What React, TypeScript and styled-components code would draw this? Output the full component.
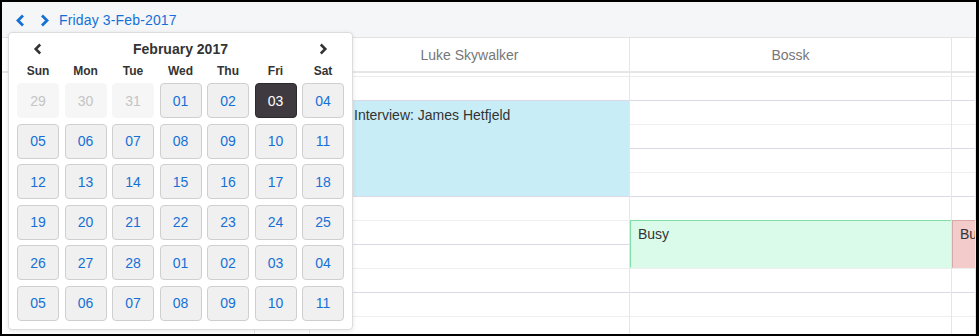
import styled, { createGlobalStyle } from "styled-components";

type CalEvent = {
  title: string;
  top: number;
  height: number;
  left?: number;
  kind: "interview" | "busy" | "blocked";
};

type Resource = {
  key: string;
  title: string;
  width?: number;
  plain?: boolean;
  events: CalEvent[];
};

const RESOURCES: Resource[] = [
  { key: "label", title: "", width: 253, plain: true, events: [] },
  { key: "time", title: "", width: 55, events: [] },
  {
    key: "luke",
    title: "Luke Skywalker",
    width: 320,
    events: [
      { title: "Interview: James Hetfjeld", top: 24, height: 95, left: 36, kind: "interview" },
    ],
  },
  {
    key: "bossk",
    title: "Bossk",
    width: 322,
    events: [{ title: "Busy", top: 143, height: 48, kind: "busy" }],
  },
  {
    key: "next",
    title: "",
    events: [{ title: "Busy", top: 143, height: 48, kind: "blocked" }],
  },
];

const WEEK_DAYS = ["Sun", "Mon", "Tue", "Wed", "Thu", "Fri", "Sat"];

type DayCell = { label: string; muted?: boolean; selected?: boolean };

const buildDays = (): DayCell[] => {
  const days: DayCell[] = [
    { label: "29", muted: true },
    { label: "30", muted: true },
    { label: "31", muted: true },
  ];
  for (let d = 1; d <= 28; d++) {
    days.push({ label: String(d).padStart(2, "0"), selected: d === 3 });
  }
  for (let d = 1; d <= 11; d++) {
    days.push({ label: String(d).padStart(2, "0") });
  }
  return days;
};

const SLOT_COUNT = 11;

const Chevron = ({ dir, size = 13 }: { dir: "left" | "right"; size?: number }) => (
  <svg width={Math.round(size * 0.77)} height={size} viewBox="0 0 10 13">
    <polyline
      points={dir === "left" ? "8,1.5 3,6.5 8,11.5" : "2,1.5 7,6.5 2,11.5"}
      fill="none"
      stroke="currentColor"
      strokeWidth="2.8"
      strokeLinecap="butt"
      strokeLinejoin="miter"
    />
  </svg>
);

export default function App() {
  const days = buildDays();
  return (
    <>
      <GlobalStyle />
      <Frame>
        <Toolbar>
          <NavButton>
            <Chevron dir="left" />
          </NavButton>
          <NavButton>
            <Chevron dir="right" />
          </NavButton>
          <DateLabel>Friday 3-Feb-2017</DateLabel>
        </Toolbar>

        <Scheduler>
          {RESOURCES.map((res) => (
            <Column key={res.key} $width={res.width}>
              <ColumnHeader>{res.title}</ColumnHeader>
              <AllDayStrip $plain={res.plain} />
              <SlotBody>
                {!res.plain &&
                  Array.from({ length: SLOT_COUNT }).map((_, i) => (
                    <Slot key={i} $hour={i % 2 === 0} />
                  ))}
                {res.events.map((ev, i) => (
                  <EventBox
                    key={i}
                    $kind={ev.kind}
                    style={{ top: ev.top, height: ev.height, left: ev.left ?? 0 }}
                  >
                    {ev.title}
                  </EventBox>
                ))}
              </SlotBody>
            </Column>
          ))}
        </Scheduler>

        <Picker>
          <PickerHead>
            <PickerNav>
              <Chevron dir="left" size={12} />
            </PickerNav>
            <MonthTitle>February 2017</MonthTitle>
            <PickerNav>
              <Chevron dir="right" size={12} />
            </PickerNav>
          </PickerHead>
          <WeekRow>
            {WEEK_DAYS.map((d) => (
              <WeekDay key={d}>{d}</WeekDay>
            ))}
          </WeekRow>
          <DayGrid>
            {days.map((d, i) => (
              <DayButton key={i} $muted={d.muted} $selected={d.selected}>
                {d.label}
              </DayButton>
            ))}
          </DayGrid>
        </Picker>
      </Frame>
    </>
  );
}

const GlobalStyle = createGlobalStyle`
  body {
    margin: 0;
    background: #fff;
    font-family: "Liberation Sans", Arial, Helvetica, sans-serif;
  }
  * { box-sizing: border-box; }
`;

const Frame = styled.div`
  position: relative;
  width: 979px;
  height: 336px;
  border: 2px solid #000;
  border-right-width: 3px;
  background: #fff;
  overflow: hidden;
  display: flex;
  flex-direction: column;
`;

const Toolbar = styled.div`
  height: 36px;
  flex: none;
  display: flex;
  align-items: center;
  padding: 1px 0 0 13px;
  background: #f5f6f8;
  border-bottom: 1px solid #e2e2e4;
  color: #1570d6;
`;

const NavButton = styled.span`
  display: flex;
  align-items: center;
  width: 10px;
  margin-right: 15px;
  color: #1570d6;
  &:nth-child(2) {
    margin-right: 9px;
  }
`;

const DateLabel = styled.span`
  font-size: 14px;
  letter-spacing: 0.15px;
  color: #1570d6;
`;

const Scheduler = styled.div`
  flex: 1;
  display: flex;
  min-height: 0;
`;

const Column = styled.div<{ $width?: number }>`
  display: flex;
  flex-direction: column;
  flex: ${({ $width }) => ($width ? `0 0 ${$width}px` : "1 1 auto")};
  border-right: 1px solid #e6e6e6;
  min-width: 0;
`;

const ColumnHeader = styled.div`
  height: 35px;
  flex: none;
  display: flex;
  align-items: center;
  justify-content: center;
  font-size: 14px;
  color: #777;
  border-bottom: 2px solid #e6e6e6;
`;

const AllDayStrip = styled.div<{ $plain?: boolean }>`
  height: 4px;
  flex: none;
  border-bottom: 1px solid ${({ $plain }) => ($plain ? "transparent" : "#ececec")};
`;

const SlotBody = styled.div`
  position: relative;
  flex: 1;
  overflow: hidden;
`;

const Slot = styled.div<{ $hour: boolean }>`
  height: 24px;
  border-bottom: 1px solid ${({ $hour }) => ($hour ? "#dcd9e6" : "#efefef")};
`;

const EVENT_COLORS = {
  interview: { bg: "#c9edf7", border: "#c9edf7" },
  busy: { bg: "#dbfbea", border: "#82dca8" },
  blocked: { bg: "#f3cbcb", border: "#d6a8a8" },
};

const EventBox = styled.div<{ $kind: CalEvent["kind"] }>`
  position: absolute;
  right: 0;
  padding: 5px 7px;
  font-size: 14px;
  color: #333;
  white-space: nowrap;
  overflow: hidden;
  background: ${({ $kind }) => EVENT_COLORS[$kind].bg};
  border: 1px solid ${({ $kind }) => EVENT_COLORS[$kind].border};
  border-right: none;
  border-bottom-color: ${({ $kind }) => EVENT_COLORS[$kind].bg};
`;

const Picker = styled.div`
  position: absolute;
  left: 6px;
  top: 30px;
  width: 345px;
  height: 298px;
  padding: 5px 8px 9px;
  background: #fff;
  border: 1px solid #dcdcdc;
  border-radius: 4px;
  box-shadow: 0 1px 4px rgba(0, 0, 0, 0.1);
`;

const PickerHead = styled.div`
  height: 22px;
  display: flex;
  align-items: center;
  justify-content: space-between;
  padding: 0 16px;
`;

const PickerNav = styled.span`
  display: flex;
  color: #333;
`;

const MonthTitle = styled.span`
  font-size: 14px;
  font-weight: bold;
  color: #333;
`;

const WeekRow = styled.div`
  margin-top: 3px;
  height: 16px;
  display: grid;
  grid-template-columns: repeat(7, 1fr);
  column-gap: 5.5px;
`;

const WeekDay = styled.span`
  text-align: center;
  font-size: 12px;
  font-weight: bold;
  line-height: 16px;
  color: #333;
`;

const DayGrid = styled.div`
  margin-top: 4px;
  display: grid;
  grid-template-columns: repeat(7, 1fr);
  grid-auto-rows: 35px;
  column-gap: 5.5px;
  row-gap: 5.5px;
`;

const DayButton = styled.div<{ $muted?: boolean; $selected?: boolean }>`
  display: flex;
  align-items: center;
  justify-content: center;
  font-size: 14px;
  border-radius: 4px;
  border: 1px solid #cfcfcf;
  background: #f0f0f0;
  color: #1570d6;
  ${({ $muted }) =>
    $muted &&
    `
      background: #f6f6f6;
      border-color: #f6f6f6;
      color: #c4c4c4;
    `}
  ${({ $selected }) =>
    $selected &&
    `
      background: #3e3a3f;
      border-color: #2c292d;
      color: #fff;
    `}
`;
